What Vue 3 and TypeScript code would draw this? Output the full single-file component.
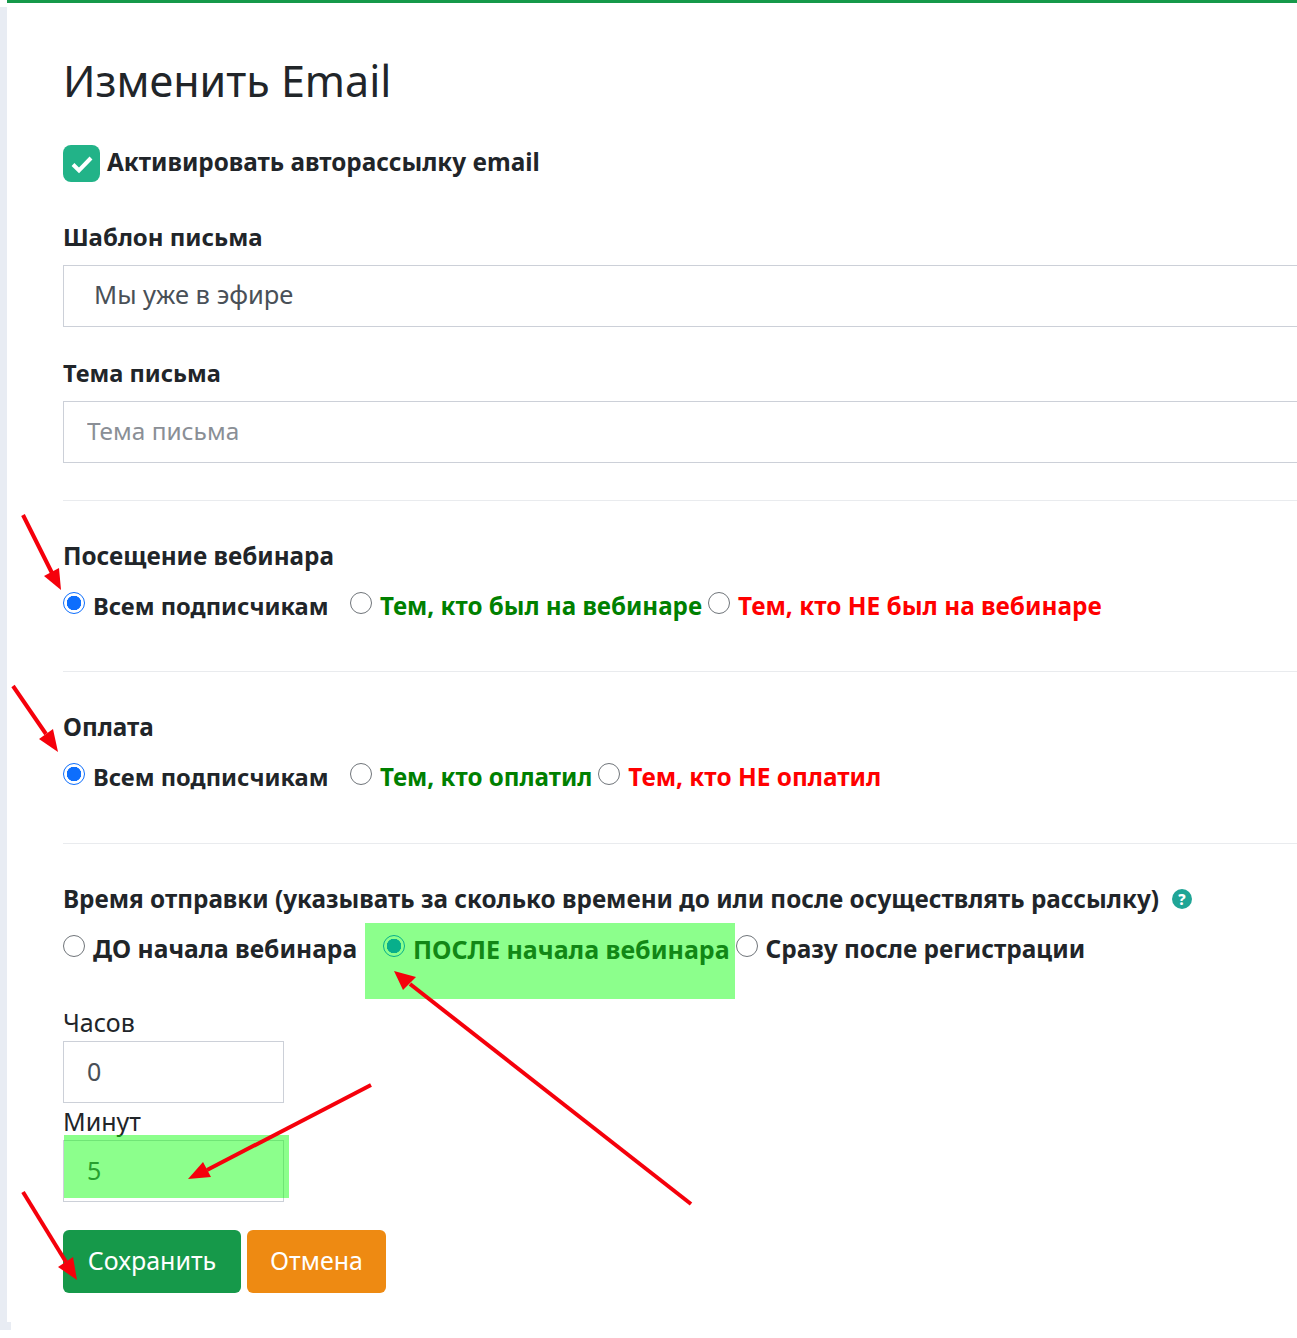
<script setup lang="ts">
import { ref } from 'vue'

const subject = ref('')
const visit = ref('all')
const payment = ref('all')
const timing = ref('after')
const hours = ref('0')
const minutes = ref('5')

const visitOptions = [
  { value: 'all', label: 'Всем подписчикам', color: '', wide: true },
  { value: 'was', label: 'Тем, кто был на вебинаре', color: 'green', wide: false },
  { value: 'not', label: 'Тем, кто НЕ был на вебинаре', color: 'red', wide: false },
]
const payOptions = [
  { value: 'all', label: 'Всем подписчикам', color: '', wide: true },
  { value: 'paid', label: 'Тем, кто оплатил', color: 'green', wide: false },
  { value: 'unpaid', label: 'Тем, кто НЕ оплатил', color: 'red', wide: false },
]
const timeOptions = [
  { value: 'before', label: 'ДО начала вебинара', color: '', wide: true },
  { value: 'after', label: 'ПОСЛЕ начала вебинара', color: 'long', wide: false },
  { value: 'reg', label: 'Сразу после регистрации', color: '', wide: false },
]

const arrows = [
  { line: '23,515 52,573', head: '61,590 44,576 59,568' },
  { line: '13,686 46,734', head: '58,752 39,739 53,729' },
  { line: '691,1204 410,984', head: '394,971 416,977 403,990' },
  { line: '371,1085 207,1170', head: '188,1179 203,1162 211,1177' },
  { line: '23,1192 66,1262', head: '77,1280 58,1267 73,1257' },
]
</script>

<template>
  <div class="page">
    <div class="card">
      <h1>Изменить Email</h1>

      <label class="activate">
        <span class="check">
          <svg width="24" height="20" viewBox="0 0 24 20">
            <path d="M3 10.5l6 6L21 4" fill="none" stroke="#fff" stroke-width="4" />
          </svg>
        </span>
        Активировать авторассылку email
      </label>

      <div class="title first">Шаблон письма</div>
      <div class="box select">Мы уже в эфире</div>

      <div class="title second">Тема письма</div>
      <input v-model="subject" class="box text" placeholder="Тема письма" />

      <hr />

      <div class="title">Посещение вебинара</div>
      <div class="radios">
        <label v-for="o in visitOptions" :key="o.value" :class="[o.color, { wide: o.wide }]">
          <input v-model="visit" type="radio" name="visit" :value="o.value" />
          <span>{{ o.label }}</span>
        </label>
      </div>

      <hr />

      <div class="title">Оплата</div>
      <div class="radios">
        <label v-for="o in payOptions" :key="o.value" :class="[o.color, { wide: o.wide }]">
          <input v-model="payment" type="radio" name="payment" :value="o.value" />
          <span>{{ o.label }}</span>
        </label>
      </div>

      <hr class="last" />

      <div class="title">
        Время отправки (указывать за сколько времени до или после осуществлять рассылку)
        <span class="help">?</span>
      </div>
      <div class="radios time">
        <label v-for="o in timeOptions" :key="o.value" :class="[o.color, { wide: o.wide }]">
          <input v-model="timing" type="radio" name="timing" :value="o.value" />
          <span>{{ o.label }}</span>
        </label>
      </div>

      <div class="small first-small">Часов</div>
      <input v-model="hours" class="box num" />
      <div class="small">Минут</div>
      <input v-model="minutes" class="box num" />

      <div class="actions">
        <button class="save">Сохранить</button>
        <button class="cancel">Отмена</button>
      </div>
    </div>

    <!-- пометки поверх скриншота -->
    <div class="mark mark-radio"></div>
    <div class="mark mark-minutes"></div>
    <svg class="arrows" width="1297" height="1338">
      <g v-for="(a, i) in arrows" :key="i">
        <polyline :points="a.line" stroke="#f5000b" stroke-width="4" fill="none" />
        <polygon :points="a.head" fill="#f5000b" />
      </g>
    </svg>
  </div>
</template>

<style>
html,
body {
  margin: 0;
  background: #fff;
  overflow: hidden;
}
</style>

<style scoped>
.page {
  position: relative;
  height: 1338px;
  overflow: hidden;
  background: #fff;
  font-family: "Noto Sans", "Liberation Sans", sans-serif;
  color: #212529;
}
.card {
  height: 1330px;
  padding: 0 0 0 63px;
  background: linear-gradient(#e8ecf3, #e8ecf3) left 7px / 7px 100% no-repeat, #fff;
  position: relative;
}
.card::before {
  content: '';
  position: absolute;
  left: 7px;
  right: 0;
  top: 0;
  height: 3px;
  background: #16994a;
}
.card::after {
  content: '';
  position: absolute;
  left: 0;
  bottom: 0;
  width: 11px;
  height: 8px;
  background: #e8ecf3;
}
h1 {
  margin: 0;
  padding-top: 56px;
  height: 52px;
  line-height: 50px;
  font-size: 43px;
  font-weight: 400;
}
.activate {
  display: flex;
  align-items: flex-start;
  gap: 7px;
  margin-top: 37px;
  height: 37px;
  font-size: 24.3px;
  font-weight: 700;
  line-height: 33px;
}
.check {
  flex: none;
  width: 37px;
  height: 37px;
  border-radius: 8px;
  background: #22b388;
  display: flex;
  align-items: center;
  justify-content: center;
}
.title {
  height: 34px;
  margin-top: 38px;
  line-height: 34px;
  font-size: 24.3px;
  font-weight: 700;
  white-space: nowrap;
  display: flex;
  align-items: center;
}
.title.first {
  font-size: 24px;
}
.title.second {
  margin-top: 29px;
  font-size: 23.6px;
}
.box {
  display: block;
  box-sizing: border-box;
  height: 62px;
  border: 1px solid #ccd0d8;
  background: transparent;
  color: #495057;
  font-family: inherit;
  font-size: 25px;
  outline: none;
}
.select,
.text {
  width: 1400px;
  margin-top: 11px;
}
.select {
  padding-left: 30px;
  font-size: 25.5px;
  line-height: 57px;
}
.text {
  padding: 0 0 4px 23px;
  font-size: 24.4px;
}
.text::placeholder {
  color: #8a8f96;
  opacity: 1;
}
hr {
  margin: 37px 0 0;
  border: 0;
  border-top: 1px solid #e9ebee;
}
hr.last {
  margin-top: 38px;
}
.radios {
  display: flex;
  height: 46px;
  margin-top: 15px;
  font-size: 24.4px;
  font-weight: 700;
}
.radios label {
  display: flex;
  align-items: flex-start;
  gap: 8px;
  white-space: nowrap;
  line-height: 34px;
  padding-right: 6px;
}
.radios label span {
  padding-top: 1px;
}
.radios label.wide {
  width: 287px;
  padding-right: 0;
  font-size: 23.7px;
}
.radios.time label.wide {
  width: 320px;
  font-size: 24.6px;
}
.radios input {
  appearance: none;
  flex: none;
  box-sizing: border-box;
  width: 22px;
  height: 22px;
  margin: 4px 0 0;
  border: 1.5px solid #70757a;
  border-radius: 50%;
  background: #fff;
}
.radios input:checked {
  border-color: #0d6efd;
  background: radial-gradient(circle, #0d6efd 0 7px, #fff 7.5px);
}
.green {
  color: #008000;
  font-size: 24.2px;
}
.red {
  color: #f00;
}
.radios .long {
  font-size: 25px;
}
.help {
  width: 20px;
  height: 20px;
  margin-left: 13px;
  border-radius: 50%;
  background: #20a596;
  color: #fff;
  font-size: 15px;
  font-weight: 800;
  line-height: 20px;
  text-align: center;
}
.small {
  height: 26px;
  margin-top: 5px;
  line-height: 26px;
  font-size: 25px;
}
.first-small {
  margin-top: 32px;
}
.num {
  width: 221px;
  margin-top: 6px;
  padding: 0 0 2px 23px;
}
.actions {
  display: flex;
  gap: 6px;
  margin-top: 28px;
}
.actions button {
  height: 63px;
  padding: 0 0 3px;
  border: 0;
  border-radius: 6px;
  color: #fff;
  font-family: inherit;
  font-size: 25px;
  font-weight: 400;
}
.save {
  width: 178px;
  background: #16994a;
}
.cancel {
  width: 139px;
  background: #ee8a12;
}
.mark {
  position: absolute;
  background: rgba(0, 255, 0, 0.45);
}
.mark-radio {
  left: 365px;
  top: 923px;
  width: 370px;
  height: 76px;
}
.mark-minutes {
  left: 64px;
  top: 1135px;
  width: 225px;
  height: 63px;
}
.arrows {
  position: absolute;
  left: 0;
  top: 0;
  pointer-events: none;
}
</style>
